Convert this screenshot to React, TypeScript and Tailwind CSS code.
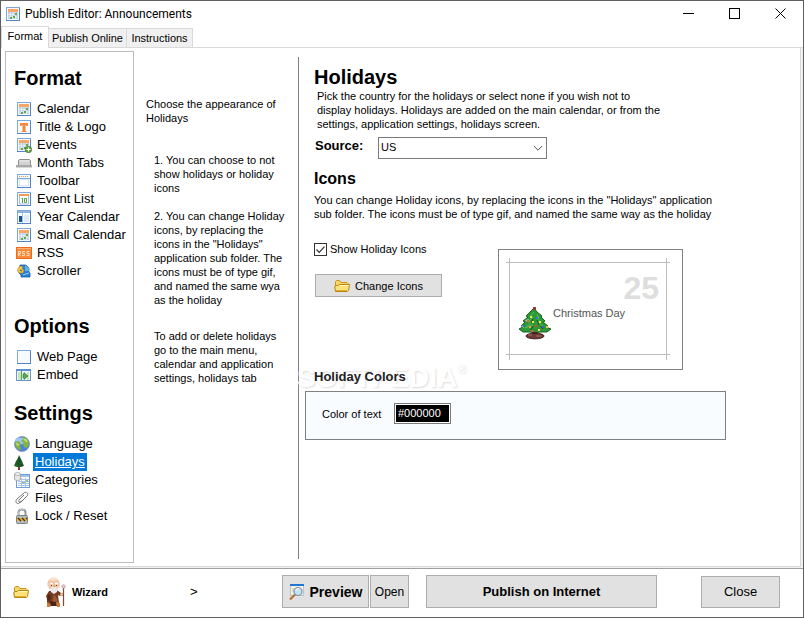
import React, { useState } from 'react';

interface NavItem {
  label: string;
  icon: React.ReactNode;
}

const Frame = ({ children }: { children?: React.ReactNode }) => (
  <svg width="16" height="16" viewBox="0 0 16 16">
    <rect x="1.5" y="1.5" width="13" height="13" fill="#f7fbff" stroke="#7fa9dc" />
    <path d="M1 14.5h14M14.5 2v13" stroke="#5585c9" />
    {children}
  </svg>
);

const GridCells = () => (
  <>
    <rect x="3" y="3" width="10" height="3" fill="#f8a566" />
    <rect x="3" y="6" width="10" height="7" fill="#c3cfe0" />
    <path d="M3 8.5h10M3 11h10M5.5 6v7M8 6v7M10.5 6v7" stroke="#f4f8fd" strokeWidth=".6" />
    <path d="M10 7h2v2h-2zM8 10h2v2H8zM5 11h2v2H5z" fill="#5fa84c" />
  </>
);

const CalendarIcon = () => (
  <Frame>
    <GridCells />
  </Frame>
);

const TitleIcon = () => (
  <Frame>
    <path d="M4 4h8v3h-1.5l-.5-1H9.500v6h1v1h-5v-1h1V6H6l-.5 1H4z" fill="#f5883c" />
  </Frame>
);

const EventsIcon = () => (
  <Frame>
    <GridCells />
    <circle cx="12.5" cy="12.5" r="3.2" fill="#68a445" stroke="#3f7a26" strokeWidth=".7" />
    <path d="M12.5 10.5v4M10.5 12.5h4" stroke="#fff" />
  </Frame>
);

const MonthTabsIcon = () => (
  <svg width="16" height="16" viewBox="0 0 16 16">
    <path d="M2.5 10V5.5l1-1h10l1 1V10" fill="#d2d2d2" stroke="#8d8d8d" />
    <path d="M4 6h9" stroke="#f1f1f1" />
    <rect x="0" y="10" width="16" height="2" fill="#a9a9a9" />
    <path d="M0 12.5h16" stroke="#d6d6d6" />
  </svg>
);

const ToolbarIcon = () => (
  <Frame>
    <path d="M3 3.5h10" stroke="#f5995a" strokeDasharray="1 1" />
    <path d="M2 5.5h12" stroke="#7fa9dc" />
    <rect x="3.5" y="6.5" width="9" height="6" fill="#fff" stroke="#d7e5f5" />
  </Frame>
);

const EventListIcon = () => (
  <Frame>
    <rect x="3" y="3" width="10" height="2" fill="#f79a55" />
    <path d="M3.5 5v8h9V5" fill="#fff" stroke="#a8bfdd" />
    <path d="M6.5 7v5M5.5 7.5h1M8.5 7.5h2v4h-2z" fill="none" stroke="#53a146" />
  </Frame>
);

const YearIcon = () => (
  <Frame>
    <rect x="2" y="2" width="12" height="2" fill="#8fb4e2" />
    <path d="M6.5 4v10" stroke="#a6c2e4" />
    <rect x="3" y="7" width="3" height="6" fill="#1f4f96" />
    <rect x="8" y="6" width="5" height="7" fill="#dfebf8" />
  </Frame>
);

const RssIcon = () => (
  <svg width="16" height="16" viewBox="0 0 16 16">
    <rect x="0.5" y="2.5" width="15" height="11" fill="#f98a37" stroke="#e96f1d" />
    <path d="M1 3.5h14" stroke="#fdb57e" />
    <path
      d="M2.5 11V6.5h2v2h-2l2 2.5M9 6.5H6.5v2h2v2H6M13.5 6.5H11v2h2v2h-2.5"
      fill="none"
      stroke="#ffe3cc"
      strokeWidth=".9"
    />
  </svg>
);

const ScrollerIcon = () => (
  <svg width="16" height="16" viewBox="0 0 16 16">
    <path d="M4 2h6l3 3v4l1 1v4H5v-2L3 10z" fill="#2b80d0" stroke="#1a5ca4" strokeWidth=".8" />
    <path d="M9 2l4 3v3H9z" fill="#5fb1ee" />
    <path d="M7 12l6-2" stroke="#8fd0f7" fill="none" />
    <path d="M2 9c-1-3 0-5 3-6l2 1-1 2 2 1-1 3-3 0z" fill="#f2c34a" stroke="#b58518" strokeWidth=".6" />
    <path d="M4 7l2 1" stroke="#1a5ca4" />
  </svg>
);

const EmbedIcon = () => (
  <svg width="16" height="16" viewBox="0 0 16 16">
    <rect x="0.5" y="2.5" width="14" height="11" fill="#eef6ff" stroke="#7096c4" />
    <rect x="0" y="2" width="15" height="2" fill="#5b8fd0" />
    <path d="M2 5h3v8H2zM11 5h2v8h-2z" fill="#c5e5bf" />
    <path d="M5.5 4v9" stroke="#5aa24e" />
    <path d="M7 7h1V5.5l4 3.5-4 3.5V11H7z" fill="#58a84d" stroke="#32772c" strokeWidth=".6" />
  </svg>
);

const GlobeIcon = () => (
  <svg width="16" height="16" viewBox="0 0 16 16">
    <circle cx="8" cy="8" r="7.5" fill="#4c84d3" stroke="#7c93b8" strokeWidth=".8" />
    <ellipse cx="6" cy="5" rx="5" ry="3.5" fill="#9cc4f4" />
    <path d="M1 6l3-1 3 2-1 3 1 3-1 1C3 13 1 10 1 6zM8 1c3 0 6 2 7 6l-1 4-3 1-2-3 1-2-3-2 2-2z" fill="#82b53c" />
    <path d="M9 2l3 1 2 3-2 0-2-2zM2 7l2 0 1 2-2 1z" fill="#c6dc7a" />
  </svg>
);

const FirIcon = () => (
  <svg width="12" height="16" viewBox="0 0 12 16">
    <path d="M5 1l2 4 1 2 2 5-3 1H3l-3-1 2-5 2-3z" fill="#22602a" />
    <path d="M5 3v4l2 1M3 8l2 3M7 10l1 2" stroke="#0f3a18" fill="none" />
    <path d="M5 13v3" stroke="#8a3427" strokeWidth="2" />
  </svg>
);

const CategoriesIcon = () => (
  <svg width="16" height="16" viewBox="0 0 16 16">
    <rect x="2.5" y="2.5" width="13" height="13" fill="#fff" stroke="#6f9dd6" />
    <rect x="3" y="3" width="12" height="2" fill="#9cc1ed" />
    <path d="M4 7.5h11M4 9.5h11M4 11.5h11M4 13.5h11M7.5 6v9M11.5 6v9" stroke="#a8c6ea" />
    <path d="M12 8h2v2h-2zM8 10h3v1H8z" fill="#8bc07c" />
    <path d="M.5 2v5c0 2 6 2 6 0V2" fill="#e6e6e6" stroke="#9d9d9d" strokeWidth=".8" />
    <ellipse cx="3.5" cy="2" rx="3" ry="1.4" fill="#fafafa" stroke="#9d9d9d" strokeWidth=".8" />
  </svg>
);

const ClipIcon = () => (
  <svg width="16" height="16" viewBox="0 0 16 16">
    <path
      d="M10 5l-5 5c-1 1 0 3 2 2l6-6c2-2 0-4.500-2.500-3.500L3 9c-2 2-1 5 1.500 4.500L9 10"
      fill="none"
      stroke="#666"
      strokeWidth=".9"
    />
  </svg>
);

const LockIcon = () => (
  <svg width="16" height="16" viewBox="0 0 16 16">
    <path d="M4.5 8V4.5c0-4 7-4 7 0V8" fill="none" stroke="#8e959b" strokeWidth="2" />
    <path d="M4.5 7V4.5c0-3.5 5-4 6-2" fill="none" stroke="#d9dde0" strokeWidth=".7" />
    <rect x="2.5" y="7.5" width="11" height="8" rx="1" fill="#b4bcc0" stroke="#7c868c" />
    <rect x="3" y="10" width="10" height="3" fill="#f5b52c" />
    <path d="M4 10l3 3M8 10l3 3M12 10l1 1" stroke="#3a3326" strokeWidth="1.4" />
  </svg>
);

const FolderIcon = () => (
  <svg width="16" height="16" viewBox="0 0 16 16">
    <path d="M1.5 12.5v-9l1-1h3l1.5 2h6l1 1v2" fill="#f5d667" stroke="#c39420" />
    <path d="M1.5 13.5L.7 8.5l1.5-1h2l1-1h10.3l-1 6-1 1z" fill="#fbe27b" stroke="#b8860f" />
    <path d="M5.5 7.5h9" stroke="#fff5bd" />
    <path d="M2 12.5h11" stroke="#e0ad2e" />
  </svg>
);

const WizardIcon = () => (
  <svg width="21" height="30" viewBox="0 0 21 30">
    <path d="M18.5 9v20" stroke="#7b4d34" strokeWidth="1.2" />
    <circle cx="18.5" cy="9.5" r="1.7" fill="#f2c9cf" stroke="#b0808a" strokeWidth=".6" />
    <path d="M4 14l8-1 4 3 3 1v2h-4l-2-1 1 8v3H2v-7l-1-3z" fill="#743b22" />
    <path d="M9 17l4 6-2 4-4-2z" fill="#9c5a33" />
    <path d="M3 17l3 2-1 5-3-1z" fill="#59270f" />
    <path d="M2 25l4 2-1 3H2zM11 25l4 1v4h-3z" fill="#c57b42" />
    <path d="M5 24l6 1v4H6z" fill="#4d2412" />
    <ellipse cx="8.5" cy="7" rx="6" ry="6.5" fill="#f1c4a4" />
    <path d="M4 3c2-3 7-3 9 0-3 1-6 1-9 0z" fill="#fbe2cf" />
    <path d="M5 12l2-2h4l2 2-1 3-3 2-3-2z" fill="#eceae8" />
    <path d="M2 6l1 0 1 4-1 1zM14 6l1 0 0 5-1-1z" fill="#e3dfdb" />
    <path d="M5 6.5h3M10 6.5h3" stroke="#fff" strokeWidth="1.5" />
    <path d="M6.5 8v1M11.5 8v1" stroke="#5b3a2c" />
    <path d="M9 8l1 2" stroke="#c98964" />
    <circle cx="16.5" cy="17.5" r="1.5" fill="#eebd97" />
  </svg>
);

const PreviewIcon = () => (
  <svg width="16" height="16" viewBox="0 0 16 16">
    <rect x="1.5" y="0.5" width="13" height="11" fill="#f5f1df" stroke="#b9c3cf" />
    <rect x="1" y="0" width="14" height="2" fill="#2375d6" />
    <path d="M3 5h3M3 7h2" stroke="#c9c2a2" />
    <path d="M6 10.5l-5 5" stroke="#b4703c" strokeWidth="2.2" />
    <circle cx="9" cy="7.5" r="4" fill="#bfe2f5" stroke="#8695a5" strokeWidth="1.2" />
    <path d="M7 7c0-2 2-3 3-2" stroke="#fff" fill="none" />
  </svg>
);

const lights = [
  [12, 10, '#d6f04c'], [18, 11, '#5070ee'], [9, 14, '#ef5b42'],
  [14, 15, '#f2e452'], [21, 15, '#f2e452'], [5, 19, '#4560dd'], [11, 20, '#f0a040'],
  [17, 19, '#e8413a'], [24, 20, '#4560dd'], [20, 23, '#f0e060'],
  [28, 20, '#e8c84c'], [13, 24, '#ed584c'],
] as const;

const ChristmasTree = () => (
  <svg width="34" height="34" viewBox="0 0 34 34">
    <path
      d="M16 2l3 4 5 4-1 1 4 4-2 1 5 4-2 1 5 2-4 3h-7l-5 1-5-1H5l-4-3 4-2-2-1 4-4-2-1 5-4-2-1z"
      fill="#2c9838"
      stroke="#1b5f24"
    />
    <path d="M16 6l-4 5 3 0-5 5 4 0-7 6 8-3M19 8l2 4-3-1 5 6-4-1 7 5" fill="none" stroke="#4fc04c" />
    <path d="M15 13l-2 4M19 14l2 5M15 20l-2 4M22 20l3 3" stroke="#12591c" />
    <path d="M7 14l4-1-2 3zM3 20l3-1v3z" fill="#a9d8a8" />
    <path d="M15 1h3v3h-3z" fill="#9b3c32" />
    <path d="M14 26h5v3h-5z" fill="#4c2420" />
    <ellipse cx="17" cy="30" rx="9" ry="2.8" fill="#6e3a36" stroke="#3f1d1c" />
    <path d="M10 29h4M18 30h5" stroke="#a66c60" />
    {lights.map(([x, y, color]) => (
      <rect key={`${x}-${y}`} x={x} y={y} width="2" height="2" fill={color} />
    ))}
  </svg>
);

const formatItems: NavItem[] = [
  { label: 'Calendar', icon: <CalendarIcon /> },
  { label: 'Title & Logo', icon: <TitleIcon /> },
  { label: 'Events', icon: <EventsIcon /> },
  { label: 'Month Tabs', icon: <MonthTabsIcon /> },
  { label: 'Toolbar', icon: <ToolbarIcon /> },
  { label: 'Event List', icon: <EventListIcon /> },
  { label: 'Year Calendar', icon: <YearIcon /> },
  { label: 'Small Calendar', icon: <CalendarIcon /> },
  { label: 'RSS', icon: <RssIcon /> },
  { label: 'Scroller', icon: <ScrollerIcon /> },
];

const optionItems: NavItem[] = [
  { label: 'Web Page', icon: <Frame /> },
  { label: 'Embed', icon: <EmbedIcon /> },
];

const settingItems: NavItem[] = [
  { label: 'Language', icon: <GlobeIcon /> },
  { label: 'Holidays', icon: <FirIcon /> },
  { label: 'Categories', icon: <CategoriesIcon /> },
  { label: 'Files', icon: <ClipIcon /> },
  { label: 'Lock / Reset', icon: <LockIcon /> },
];

interface NavSectionProps {
  title: string;
  items: NavItem[];
  active: string;
  onSelect: (label: string) => void;
  listClass: string;
}

const NavSection = ({ title, items, active, onSelect, listClass }: NavSectionProps) => (
  <section>
    <h2 className="pl-2 text-[20px] leading-6 font-bold">{title}</h2>
    <ul className={`mt-2.5 ${listClass}`}>
      {items.map((item) => (
        <li key={item.label} className="flex h-[18px] items-center gap-[3px]">
          <span className="flex w-4 shrink-0 justify-start">{item.icon}</span>
          <a
            href="#"
            onClick={() => onSelect(item.label)}
            className={`px-0.5 text-[13px] leading-[18px] whitespace-nowrap ${
              active === item.label ? 'bg-[#0078d7] text-white underline' : ''
            }`}
          >
            {item.label}
          </a>
        </li>
      ))}
    </ul>
  </section>
);

const buttonClass = 'flex items-center justify-center border border-[#adadad] bg-[#e1e1e1]';

const App = () => {
  const [active, setActive] = useState('Holidays');
  const [showIcons, setShowIcons] = useState(true);

  return (
    <div className="flex min-h-screen flex-col border border-[#5f5f5f] bg-white font-['Liberation_Sans',Arial,sans-serif] text-[11px] leading-[14px] text-black">
      {/* Title bar */}
      <header className="flex h-[25px] items-center pl-1">
        <CalendarIcon />
        <h1 className="ml-1 flex-1 font-[Roboto,sans-serif] text-[12px] leading-4">Publish Editor: Announcements</h1>
        <div className="flex h-full">
          <button aria-label="Minimize" className="flex w-[46px] items-center justify-center">
            <svg width="11" height="11" viewBox="0 0 11 11"><path d="M0 5.5h11" stroke="#000" /></svg>
          </button>
          <button aria-label="Maximize" className="flex w-[46px] items-center justify-center">
            <svg width="11" height="11" viewBox="0 0 11 11"><rect x=".5" y=".5" width="10" height="10" fill="none" stroke="#000" /></svg>
          </button>
          <button aria-label="Close window" className="flex w-[46px] items-center justify-center">
            <svg width="11" height="11" viewBox="0 0 11 11"><path d="M.5.5l10 10M10.5.5l-10 10" stroke="#000" /></svg>
          </button>
        </div>
      </header>

      {/* Tabs */}
      <div role="tablist" className="flex h-[22px] items-end border-b border-[#d9d9d9]">
        <button role="tab" aria-selected="true" className="-mb-px h-[22px] w-12 border border-b-0 border-[#d9d9d9] bg-white pb-1">
          Format
        </button>
        <button role="tab" aria-selected="false" className="h-[19px] w-[78px] border border-b-0 border-l-0 border-[#d9d9d9] bg-[#f0f0f0]">
          Publish Online
        </button>
        <button role="tab" aria-selected="false" className="h-[19px] w-[66px] border border-b-0 border-l-0 border-[#d9d9d9] bg-[#f0f0f0]">
          Instructions
        </button>
      </div>

      <div className="flex flex-1 bg-[#f0f0f0] pr-0.5 pb-px">
        <main className="flex flex-1 border-r border-b border-[#d9d9d9] bg-white py-[3px] pl-1">
          {/* Sidebar */}
          <nav className="w-[129px] shrink-0 border border-[#bcbcbc] pt-3.5">
            <NavSection title="Format" items={formatItems} active={active} onSelect={setActive} listClass="pl-2.5" />
            <div className="mt-[34px]">
              <NavSection title="Options" items={optionItems} active={active} onSelect={setActive} listClass="pl-2.5" />
            </div>
            <div className="mt-[17px]">
              <NavSection title="Settings" items={settingItems} active={active} onSelect={setActive} listClass="pl-2" />
            </div>
          </nav>

          {/* Help text */}
          <aside className="w-[164px] shrink-0 pt-[46px] pl-3">
            <p className="w-[132px]">Choose the appearance of Holidays</p>
            <div className="mt-7 ml-2 flex w-[134px] flex-col">
              <p>1. You can choose to not show holidays or holiday icons</p>
              <p className="mt-3.5">
                2. You can change Holiday icons, by replacing the icons in the "Holidays" application sub folder. The
                icons must be of type gif, and named the same wya as the holiday
              </p>
              <p className="mt-[22px]">
                To add or delete holidays go to the main menu, calendar and application settings, holidays tab
              </p>
            </div>
          </aside>

          <section className="mt-1.5 mb-1 flex-1 border-l border-[#808080] pt-2 pl-1.5">
            <div className="pl-[9px]">
              <h2 className="text-[20px] leading-6 font-bold">Holidays</h2>
              <p className="max-w-[348px] pl-[3px]">
                Pick the country for the holidays or select none if you wish not to display holidays. Holidays are added
                on the main calendar, or from the settings, application settings, holidays screen.
              </p>
              <div className="mt-1.5 flex">
                <label htmlFor="source" className="w-16 pl-px text-[13px] leading-[18px] font-bold">
                  Source:
                </label>
                <div className="relative">
                  <select id="source" className="block h-[22px] w-[169px] appearance-none border border-[#7a7a7a] bg-white pb-0.5 pl-0.5">
                    <option>US</option>
                  </select>
                  <svg className="pointer-events-none absolute top-2 right-1" width="10" height="7" viewBox="0 0 10 7">
                    <path d="M.8 1l4.2 4.2L9.2 1" fill="none" stroke="#555" />
                  </svg>
                </div>
              </div>

              <h3 className="mt-2.5 text-[16px] leading-5 font-bold">Icons</h3>
              <p className="mt-1 max-w-[400px]">
                You can change Holiday icons, by replacing the icons in the "Holidays" application sub folder. The icons
                must be of type gif, and named the same way as the holiday
              </p>

              <div className="mt-[21px] flex">
                <div className="w-[184px]">
                  <label className="flex items-center gap-[3px]">
                    <span className="relative flex">
                      <input
                        type="checkbox"
                        checked={showIcons}
                        onChange={(e) => setShowIcons(e.target.checked)}
                        className="h-[13px] w-[13px] appearance-none border border-[#333] bg-white"
                      />
                      {showIcons && (
                        <svg className="pointer-events-none absolute inset-0" width="13" height="13" viewBox="0 0 13 13">
                          <path d="M2.5 6.5l2.7 2.8L10.5 3.7" fill="none" stroke="#333" strokeWidth="1.2" />
                        </svg>
                      )}
                    </span>
                    Show Holiday Icons
                  </label>
                  <button className={`${buttonClass} mt-[18px] ml-px h-[23px] w-[127px] gap-[5px]`}>
                    <FolderIcon />
                    Change Icons
                  </button>
                </div>

                {/* Sample day cell */}
                <div className="mt-[7px] h-[121px] w-[185px] border border-[#808080]">
                  <div className="relative mx-[7px] my-2 h-[103px] text-[#555]">
                    <svg className="absolute inset-0 h-full w-full" viewBox="0 0 169 103">
                      <path d="M0 4.5h164M0 96.5h164M3.5 0v102M160.5 0v102" stroke="#bdbdbd" fill="none" />
                    </svg>
                    <div className="flex h-full flex-col pt-3 pl-3">
                      <div className="pr-4 text-right text-[32px] leading-9 font-bold text-[#dedede]">25</div>
                      <div className="flex">
                        <div className="h-[34px] w-[34px]">{showIcons && <ChristmasTree />}</div>
                        <span className="pl-px">Christmas Day</span>
                      </div>
                    </div>
                  </div>
                </div>
              </div>
            </div>

            <div className="relative -mt-px">
              <div
                aria-hidden="true"
                className="pointer-events-none absolute -bottom-2 -left-2 flex items-start text-[28px] leading-[30px] font-bold text-white [text-shadow:1px_1px_2px_#dcdcdc]"
              >
                SOFTPEDIA<span className="text-[12px] leading-3">®</span>
              </div>
              <h3 className="relative pl-[9px] text-[13px] leading-4 font-bold text-[#222]">Holiday Colors</h3>
            </div>
            <div className="relative mt-1.5 flex h-[49px] max-w-[421px] items-start border border-[#808080] bg-[#f8fcff] pt-[11px] pl-4">
              <label htmlFor="textColor" className="w-[72px] pt-1">
                Color of text
              </label>
              <div className="border border-[#7a7a7a] bg-white p-px">
                <input
                  id="textColor"
                  defaultValue="#000000"
                  className="block h-[17px] w-[53px] bg-black pb-0.5 pl-0.5 text-white outline-none"
                />
              </div>
            </div>
          </section>
        </main>
      </div>

      {/* Action bar */}
      <footer className="flex h-[49px] shrink-0 items-center border-t border-[#a0a0a0] pb-[3px] pl-3">
        <div className="flex w-[269px] shrink-0 items-center">
          <button aria-label="Open folder" className="flex">
            <FolderIcon />
          </button>
          <button className="ml-4 flex items-center gap-1.5 font-bold">
            <WizardIcon />
            Wizard
          </button>
          <button aria-label="Next" className="ml-[82px] text-[13px]">
            &gt;
          </button>
        </div>
        <button className={`${buttonClass} h-[33px] w-[87px] gap-[5px] text-[14px] font-bold`}>
          <PreviewIcon />
          Preview
        </button>
        <button className={`${buttonClass} ml-px h-[33px] w-[39px] text-[12px]`}>Open</button>
        <button className={`${buttonClass} ml-[17px] h-[33px] w-[231px] text-[13px] font-bold`}>
          Publish on Internet
        </button>
        <button className={`${buttonClass} mr-[23px] ml-auto h-8 w-[79px] text-[13px]`}>Close</button>
      </footer>
    </div>
  );
};

export default App;
